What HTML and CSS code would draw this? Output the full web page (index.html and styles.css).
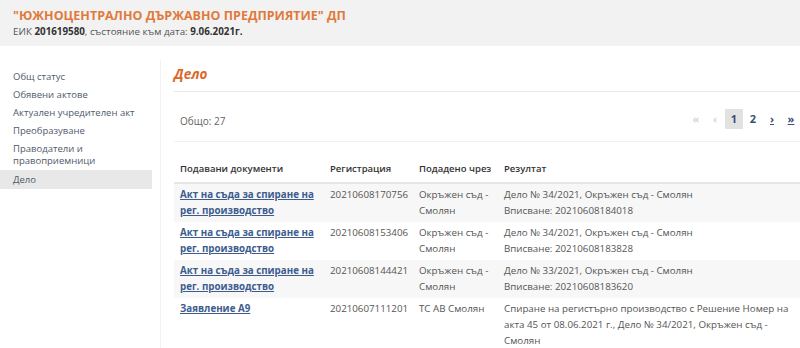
FILE: index.html
```html
<!DOCTYPE html>
<html lang="bg">
<head>
  <meta charset="UTF-8" />
  <title>Дело</title>
  <link rel="stylesheet" href="styles.css">
</head>
<body>
  <div class="company">
    <div class="company-name">"ЮЖНОЦЕНТРАЛНО ДЪРЖАВНО ПРЕДПРИЯТИЕ" ДП</div>
    <div class="company-info">ЕИК <b>201619580</b>, състояние към дата: <b>9.06.2021г.</b></div>
  </div>

  <div class="layout">
    <ul class="side-menu">
      <li><a href="#">Общ статус</a></li>
      <li><a href="#">Обявени актове</a></li>
      <li><a href="#">Актуален учредителен акт</a></li>
      <li><a href="#">Преобразуване</a></li>
      <li class="two-lines"><a href="#">Праводатели и правоприемници</a></li>
      <li class="active"><a href="#">Дело</a></li>
    </ul>

    <div class="content">
      <h2 class="section-title">Дело</h2>

      <div class="toolbar">
        <div class="total">Общо: 27</div>
        <div class="pager">
          <span class="disabled">«</span>
          <span class="disabled">‹</span>
          <span class="current">1</span>
          <a href="#">2</a>
          <a href="#" class="arrow">›</a>
          <a href="#" class="arrow">»</a>
        </div>
      </div>

      <table class="docs">
        <colgroup>
          <col style="width: 150px">
          <col style="width: 89px">
          <col style="width: 85px">
          <col>
        </colgroup>
        <thead>
          <tr>
            <th>Подавани документи</th>
            <th>Регистрация</th>
            <th>Подадено чрез</th>
            <th>Резултат</th>
          </tr>
        </thead>
        <tbody>
          <tr>
            <td><a href="#">Акт на съда за спиране на рег. производство</a></td>
            <td>20210608170756</td>
            <td>Окръжен съд - Смолян</td>
            <td>Дело № 34/2021, Окръжен съд - Смолян<br>Вписване: 20210608184018</td>
          </tr>
          <tr>
            <td><a href="#">Акт на съда за спиране на рег. производство</a></td>
            <td>20210608153406</td>
            <td>Окръжен съд - Смолян</td>
            <td>Дело № 34/2021, Окръжен съд - Смолян<br>Вписване: 20210608183828</td>
          </tr>
          <tr>
            <td><a href="#">Акт на съда за спиране на рег. производство</a></td>
            <td>20210608144421</td>
            <td>Окръжен съд - Смолян</td>
            <td>Дело № 33/2021, Окръжен съд - Смолян<br>Вписване: 20210608183620</td>
          </tr>
          <tr>
            <td><a href="#">Заявление А9</a></td>
            <td>20210607111201</td>
            <td>ТС АВ Смолян</td>
            <td>Спиране на регистърно производство с Решение Номер на акта 45 от 08.06.2021 г., Дело № 34/2021, Окръжен съд - Смолян</td>
          </tr>
        </tbody>
      </table>
    </div>
  </div>
</body>
</html>
```

FILE: styles.css
```css
* { box-sizing: border-box; }
html, body {
  margin: 0;
  padding: 0;
  height: 100%;
  font-family: "Open Sans", "Noto Sans", sans-serif;
  background-color: #fff;
  color: #555;
  overflow: hidden;
}

/* шапка с фирмата */
.company {
  height: 46px;
  padding: 7px 13px 0;
  background-color: #f2f2f2;
}
.company-name {
  font-size: 12.5px;
  font-weight: bold;
  color: #e07a3c;
  line-height: 17px;
}
.company-info {
  font-size: 9.8px;
  line-height: 15px;
  color: #555;
}
.company-info b {
  color: #333;
}

.layout {
  display: flex;
  align-items: flex-start;
}

/* лява навигация */
.side-menu {
  list-style: none;
  margin: 0;
  padding: 22px 0 0;
  width: 152px;
  flex-shrink: 0;
}
.side-menu li a {
  display: block;
  padding: 0 13px;
  font-size: 9.5px;
  line-height: 18px;
  color: #4f5a6b;
  text-decoration: none;
}
.side-menu li.two-lines a {
  line-height: 12px;
  padding-top: 3px;
  padding-bottom: 3px;
}
.side-menu li.active a {
  background-color: #e8e8e8;
  line-height: 19px;
}

/* основно съдържание */
.content {
  flex: 1;
  margin: 14px 0 0 8px;
  padding-left: 13px;
  border-left: 1px solid #f2f2f2;
  height: 300px;
}
.section-title {
  margin: 0;
  padding-top: 5px;
  height: 32px;
  font-size: 13.5px;
  font-style: italic;
  font-weight: bold;
  color: #d9692b;
  border-bottom: 1px solid #e8e8e8;
}

.toolbar {
  display: flex;
  justify-content: space-between;
  align-items: center;
  height: 50px;
  padding: 4px 0 0 6px;
  border-bottom: 1px solid #f0f0f0;
}
.total {
  padding-top: 4px;
  font-size: 10px;
  color: #666;
}
.pager {
  display: flex;
  align-items: center;
  gap: 1px;
  font-size: 11px;
  font-weight: bold;
}
.pager span,
.pager a {
  display: block;
  width: 18px;
  height: 20px;
  line-height: 20px;
  text-align: center;
  color: #3d4f72;
  text-decoration: none;
}
.pager .disabled {
  color: #d6d6d6;
}
.pager .current {
  background-color: #e2e2e2;
}
.pager .arrow {
  text-decoration: underline;
}

/* таблица с документи */
.docs {
  width: 626px;
  margin-top: 19px;
  border-collapse: collapse;
  table-layout: fixed;
  font-size: 9.75px;
}
.docs th {
  text-align: left;
  font-size: 9.5px;
  font-weight: 600;
  color: #333;
  padding: 0 6px 5px;
  line-height: 16px;
  border-bottom: 2px solid #e6e6e6;
}
.docs td {
  vertical-align: top;
  padding: 3px 6px;
  line-height: 16px;
  color: #555;
}
.docs tbody tr:nth-child(odd) {
  background-color: #f7f7f7;
}
.docs td a {
  font-weight: bold;
  color: #3d5c8e;
}
```
